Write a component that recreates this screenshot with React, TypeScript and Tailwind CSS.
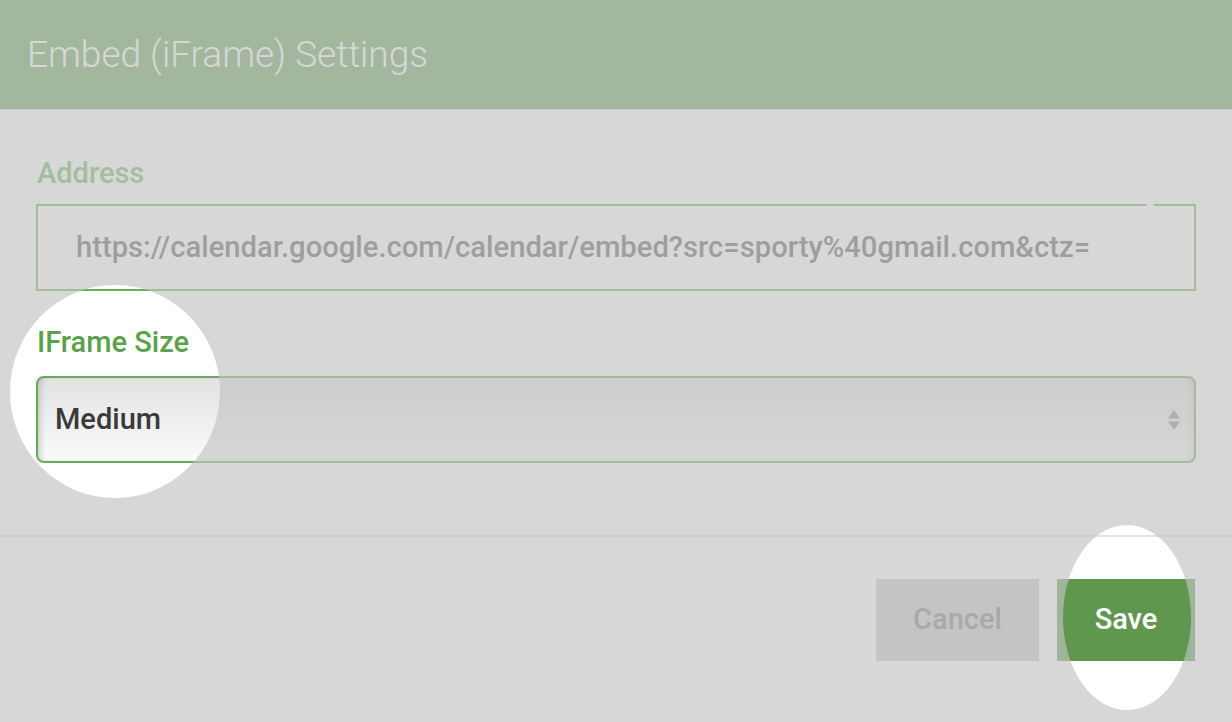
import React from 'react';

const FONT = { fontFamily: 'Roboto, "Noto Sans", "Liberation Sans", sans-serif' };

// spotlight holes: [cx, cy, rx, ry]
const holes: [number, number, number, number][] = [
  [115, 391.5, 105, 106.5],
  [1127, 617.5, 64, 92.5],
];

function ellipsePath([cx, cy, rx, ry]: [number, number, number, number]) {
  return `M${cx - rx} ${cy} a${rx} ${ry} 0 1 0 ${rx * 2} 0 a${rx} ${ry} 0 1 0 ${-rx * 2} 0Z`;
}

function Spotlight() {
  const d = 'M0 0H1232V722H0Z ' + holes.map(ellipsePath).join(' ');
  return (
    <svg
      className="pointer-events-none absolute inset-0"
      width="1232"
      height="722"
      viewBox="0 0 1232 722"
    >
      <path d={d} fillRule="evenodd" fill="rgb(194,194,194)" fillOpacity="0.66" />
    </svg>
  );
}

function SelectArrows() {
  return (
    <svg width="14" height="22" viewBox="0 0 14 22" className="shrink-0">
      <path d="M7 1 L13 9.5 H1 Z" fill="#8a8a8a" />
      <path d="M7 21 L13 12.5 H1 Z" fill="#8a8a8a" />
    </svg>
  );
}

export default function App() {
  return (
    <div className="relative h-[722px] w-[1232px] overflow-hidden bg-white" style={FONT}>
      <header className="flex h-[109px] items-center border-b border-[#5a8d4f] bg-[#68a05c] px-[27px] shadow-[0_1px_2px_rgba(0,0,0,0.15)]">
        <h1 className="text-[37px] font-light leading-none text-white">Embed (iFrame) Settings</h1>
      </header>

      <div className="px-[36px] pt-[47px]">
        <label className="block pl-px text-[29px] font-medium leading-[35px] text-[#6ab455]">Address</label>
        <div className="relative mt-[13px] flex h-[87px] items-center border-2 border-[#66b152] pl-[38px]">
          <span className="text-[29.2px] font-medium leading-none text-[#585858]">
            https://calendar.google.com/calendar/embed?src=sporty%40gmail.com&amp;ctz=
          </span>
          <span className="absolute -top-[2px] left-[1108px] h-[3px] w-[8px] rounded-full bg-white" />
        </div>

        <label className="mt-[34px] block pl-px text-[29px] font-medium leading-[35px] text-[#5aa24a]">
          IFrame Size
        </label>
        <div className="mt-[16px] flex h-[87px] items-center justify-between rounded-[8px] border-2 border-[#66ab55] bg-gradient-to-b from-[#e2e2e2] to-[#fafafa] pl-[17px] pr-[13px] shadow-[inset_6px_0_6px_-4px_rgba(0,0,0,0.18),inset_-6px_0_6px_-4px_rgba(0,0,0,0.12)]">
          <span className="text-[29px] font-medium leading-none text-[#3a3a3a]">Medium</span>
          <SelectArrows />
        </div>
      </div>

      <div className="mt-[72px] h-[2px] bg-[#e2e2e2]" />

      <div className="flex justify-end gap-[18px] px-[37px] pt-[42px]">
        <button className="h-[82px] w-[163px] bg-[#c6c6c6] text-[29px] font-medium text-[#7a7a7a]">Cancel</button>
        <button className="h-[82px] w-[138px] bg-[#5f974f] text-[29px] font-medium text-white">Save</button>
      </div>

      <Spotlight />
    </div>
  );
}
